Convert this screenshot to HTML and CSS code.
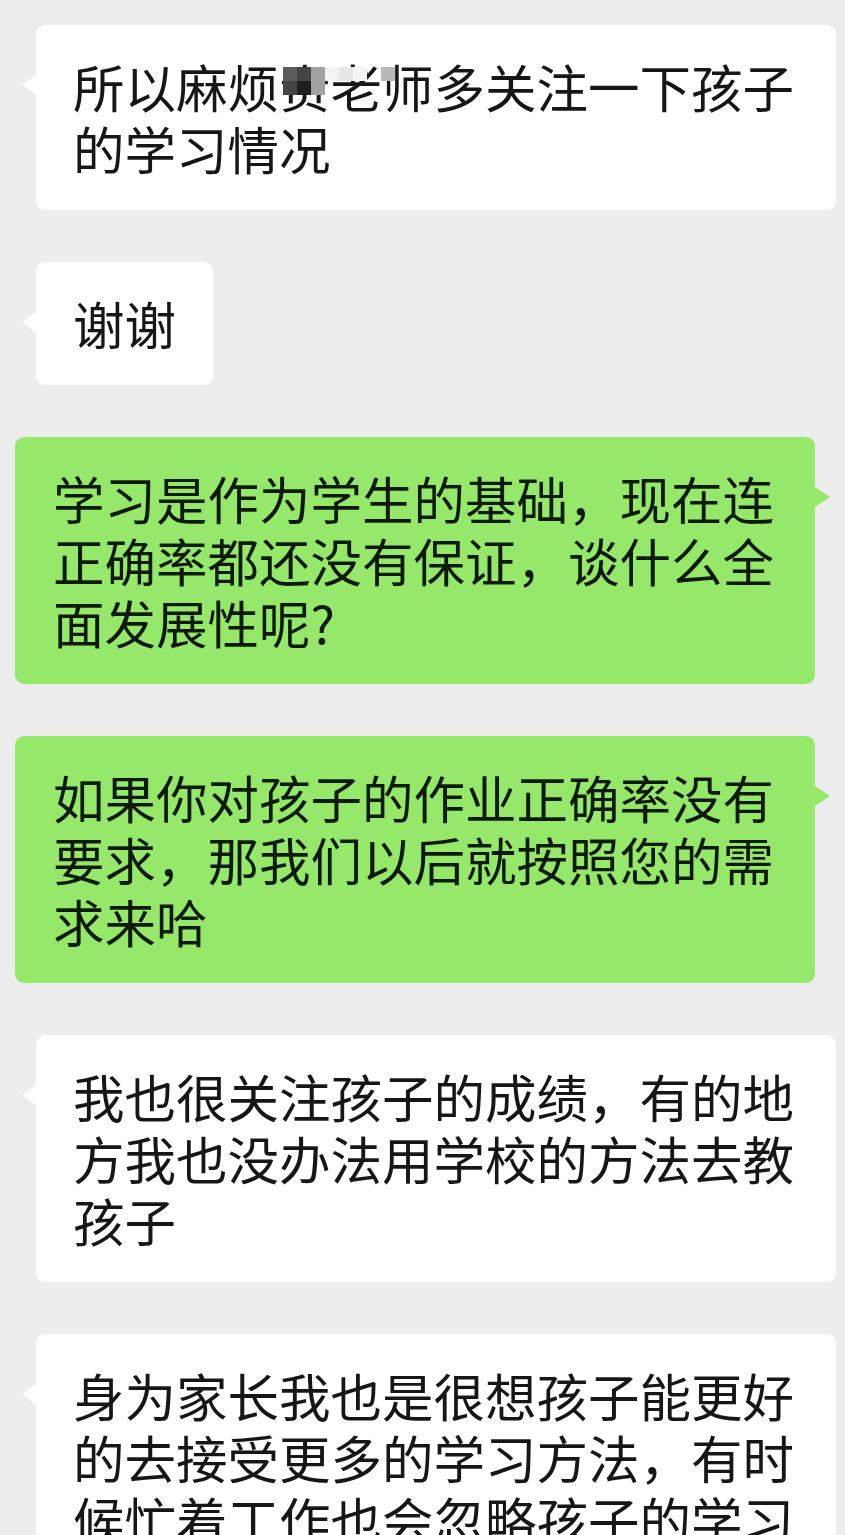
FILE: index.html
```html
<!DOCTYPE html>
<html lang="zh-CN">
  <head>
    <meta charset="UTF-8" />
    <meta name="viewport" content="width=device-width, initial-scale=1.0" />
    <title>聊天记录</title>
    <link rel="stylesheet" href="styles.css">
  </head>

  <body>
    <div class="chat">
      <div class="row left">
        <div class="bubble">
          所以麻烦贵老师多关注一下孩子的学习情况
          <div class="mosaic">
            <span class="tile d3"></span><span class="tile d2"></span><span class="tile g1"></span><span class="tile l1"></span><span class="tile l2"></span><span class="tile l1"></span><span class="tile e"></span><span class="tile g2"></span>
            <span class="tile d2"></span><span class="tile d1"></span><span class="tile g1"></span><span class="tile e"></span><span class="tile e"></span><span class="tile e"></span><span class="tile e"></span><span class="tile e"></span>
          </div>
        </div>
      </div>

      <div class="row left">
        <div class="bubble">谢谢</div>
      </div>

      <div class="row right">
        <div class="bubble">学习是作为学生的基础，现在连正确率都还没有保证，谈什么全面发展性呢?</div>
      </div>

      <div class="row right">
        <div class="bubble">如果你对孩子的作业正确率没有要求，那我们以后就按照您的需求来哈</div>
      </div>

      <div class="row left">
        <div class="bubble">我也很关注孩子的成绩，有的地方我也没办法用学校的方法去教孩子</div>
      </div>

      <div class="row left">
        <div class="bubble">身为家长我也是很想孩子能更好的去接受更多的学习方法，有时候忙着工作也会忽略孩子的学习</div>
      </div>
    </div>
  </body>
</html>
```

FILE: styles.css
```css
body {
  margin: 0;
  padding: 0;
  background-color: #ededed;
  font-family: "Noto Sans CJK SC", "Noto Sans", sans-serif;
  overflow: hidden;
}

.chat {
  display: flex;
  flex-direction: column;
  gap: 52px;
  padding-top: 25px;
}

.row {
  display: flex;
}

.row.left {
  justify-content: flex-start;
  padding-left: 36px;
}

.row.right {
  justify-content: flex-end;
  padding-right: 30px;
}

.bubble {
  position: relative;
  max-width: 800px;
  box-sizing: border-box;
  padding: 30px 37px 31px 37px;
  border-radius: 9px;
  font-size: 51.5px;
  line-height: 62px;
  color: #161616;
}

.left .bubble {
  background-color: #ffffff;
}

.right .bubble {
  background-color: #96e86b;
  color: #0e1a08;
  padding-left: 38px;
}

/* little arrows */
.bubble::before {
  content: "";
  position: absolute;
  top: 50px;
  width: 0;
  height: 0;
  border-top: 10px solid transparent;
  border-bottom: 10px solid transparent;
}

.left .bubble::before {
  left: -14px;
  border-right: 14px solid #ffffff;
}

.right .bubble::before {
  right: -15px;
  border-left: 15px solid #96e86b;
}

/* blurred name */
.mosaic {
  position: absolute;
  left: 247px;
  top: 42px;
  display: grid;
  grid-template-columns: repeat(8, 14px);
  grid-auto-rows: 14px;
}

.tile.d1 { background-color: #1f1f1f; }
.tile.d2 { background-color: #454545; }
.tile.d3 { background-color: #5c5c5c; }
.tile.g1 { background-color: #a2a2a2; }
.tile.g2 { background-color: #b9b9b9; }
.tile.l1 { background-color: #f3f3f3; }
.tile.l2 { background-color: #e7e7e7; }
.tile.e { background-color: transparent; }
```
